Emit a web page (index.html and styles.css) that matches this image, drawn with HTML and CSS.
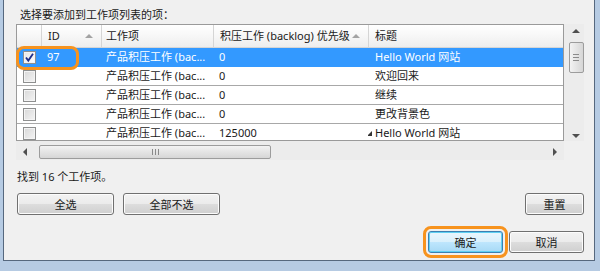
FILE: index.html
```html
<!DOCTYPE html>
<html lang="zh-CN">
<head>
   <meta charset="UTF-8">
   <meta name="viewport" content="width=device-width, initial-scale=1">
   <link rel="stylesheet" href="styles.css">
   <title>选择工作项</title>
</head>

<body>

   <div class="window">
      <div class="prompt">选择要添加到工作项列表的项：</div>

      <div class="list">
         <div class="grid">
            <div class="row head">
               <div class="cell check"></div>
               <div class="cell id">ID <span class="sort"></span></div>
               <div class="cell item">工作项</div>
               <div class="cell prio">积压工作 (backlog) 优先级 <span class="sort"></span></div>
               <div class="cell title">标题</div>
            </div>

            <div class="row selected">
               <div class="cell check"><span class="box on">
                  <svg width="11" height="11" viewBox="0 0 11 11"><path d="M2 5.5 L4.3 8.6 L9 1.8" fill="none" stroke="#1f2f8a" stroke-width="1.8"/></svg>
               </span></div>
               <div class="cell id">97</div>
               <div class="cell item">产品积压工作 (bac...</div>
               <div class="cell prio">0</div>
               <div class="cell title">Hello World 网站</div>
            </div>

            <div class="row">
               <div class="cell check"><span class="box"></span></div>
               <div class="cell id"></div>
               <div class="cell item">产品积压工作 (bac...</div>
               <div class="cell prio">0</div>
               <div class="cell title">欢迎回来</div>
            </div>

            <div class="row">
               <div class="cell check"><span class="box"></span></div>
               <div class="cell id"></div>
               <div class="cell item">产品积压工作 (bac...</div>
               <div class="cell prio">0</div>
               <div class="cell title">继续</div>
            </div>

            <div class="row">
               <div class="cell check"><span class="box"></span></div>
               <div class="cell id"></div>
               <div class="cell item">产品积压工作 (bac...</div>
               <div class="cell prio">0</div>
               <div class="cell title">更改背景色</div>
            </div>

            <div class="row">
               <div class="cell check"><span class="box"></span></div>
               <div class="cell id"></div>
               <div class="cell item">产品积压工作 (bac...</div>
               <div class="cell prio">125000</div>
               <div class="cell title"><span class="twist"></span>Hello World 网站</div>
            </div>
         </div>

         <div class="vscroll">
            <span class="arrow up"></span>
            <span class="thumb vthumb"><i></i><i></i><i></i></span>
            <span class="fill"></span>
            <span class="arrow down"></span>
         </div>

         <div class="hscroll">
            <span class="arrow left"></span>
            <span class="thumb hthumb"><i></i><i></i><i></i></span>
            <span class="fill"></span>
            <span class="arrow right"></span>
         </div>
      </div>

      <div class="found">找到 16 个工作项。</div>

      <div class="actions">
         <button class="btn first">全选</button>
         <button class="btn">全部不选</button>
         <span class="fill"></span>
         <button class="btn small">重置</button>
      </div>

      <div class="dialog">
         <button class="btn wide default">确定</button>
         <button class="btn wide">取消</button>
      </div>

      <!-- marcas laranja -->
      <div class="callout callout-id"></div>
      <div class="callout callout-ok"></div>
   </div>

</body>
</html>
```

FILE: styles.css
```css
* {
   margin:0;
   padding:0;
   box-sizing:border-box;
   font-family:"Noto Sans", "Noto Sans CJK SC", sans-serif;
}

body {
   background:#b6cbe3;
   width:600px;
   height:271px;
   overflow:hidden;
}

.window {
   position:relative;
   background:#f0f0f0;
   margin-left:3px;
   width:592px;
   height:261px;
   border-left:1px solid #56687e;
   border-right:1px solid #56687e;
   border-bottom:1px solid #56687e;
   padding:5px 10px 0 12px;
   display:flex;
   flex-direction:column;
   font-size:11px;
   color:#1a1a1a;
}

.prompt {
   height:19px;
   line-height:19px;
   padding-left:4px;
}

/* lista */

.list {
   display:grid;
   grid-template-columns:548px 20px;
   grid-template-rows:117px 19px;
}

.grid {
   border:1px solid #9a9a9a;
   background:#fff;
   overflow:hidden;
}

.row {
   display:grid;
   grid-template-columns:24px 60px 112px 155px 195px;
   height:19px;
   border-bottom:1px solid #a8a8a8;
   align-items:center;
   white-space:nowrap;
}

.row.head {
   height:23px;
   border-bottom:1px solid #d5d5d5;
   background:linear-gradient(#ffffff, #f7f7f7 50%, #ededed);
   align-items:stretch;
}

.row.head .cell {
   display:flex;
   align-items:center;
   justify-content:space-between;
   padding-right:8px;
}

.row.head .cell + .cell {
   border-left:1px solid #d5d5d5;
}

.row.head .item {
   padding-left:4px;
}

.cell {
   overflow:hidden;
   padding-left:6px;
   line-height:18px;
}

.row .cell.title {
   padding-left:7px;
}

.row.head .cell.title {
   padding-left:6px;
}

.row .check {
   padding-left:6px;
   display:flex;
   align-items:center;
}

.row .item {
   padding-left:5px;
}

.row.selected {
   background:#3399ff;
   color:#fff;
   border-bottom-color:#3399ff;
}

.sort {
   width:0;
   height:0;
   border-left:4px solid transparent;
   border-right:4px solid transparent;
   border-bottom:4px solid #a3a3a3;
}

.box {
   display:flex;
   align-items:center;
   justify-content:center;
   width:13px;
   height:13px;
   border:1px solid #8e8f8f;
   background:linear-gradient(135deg, #d8d8d8, #f4f4f4);
   box-shadow:inset 0 0 0 1px #f4f4f4;
}

.box.on {
   background:linear-gradient(135deg, #e6e6e6, #ffffff);
}

.twist {
   display:inline-block;
   width:0;
   height:0;
   margin-left:-8px;
   margin-right:3px;
   border-left:5px solid transparent;
   border-bottom:5px solid #333;
   vertical-align:1px;
}

/* barras de rolagem */

.vscroll {
   display:flex;
   flex-direction:column;
   align-items:center;
   padding-left:4px;
   background:#ececec;
}

.vscroll .arrow.up {
   margin-top:5px;
   border-left:4px solid transparent;
   border-right:4px solid transparent;
   border-bottom:4px solid #4f4f4f;
}

.vscroll .arrow.down {
   margin-bottom:3px;
   border-left:4px solid transparent;
   border-right:4px solid transparent;
   border-top:4px solid #4f4f4f;
}

.arrow {
   width:0;
   height:0;
}

.fill {
   flex:1;
}

.thumb {
   display:flex;
   align-items:center;
   justify-content:center;
   gap:2px;
   border:1px solid #9c9c9c;
   border-radius:2px;
}

.vthumb {
   margin-top:9px;
   width:15px;
   height:31px;
   flex-direction:column;
   background:linear-gradient(90deg, #f3f3f3, #e4e4e4 50%, #d6d6d6);
}

.vthumb i {
   display:block;
   width:6px;
   height:1px;
   background:#8a8a8a;
}

.hscroll {
   display:flex;
   align-items:center;
   padding-top:3px;
   background:#ececec;
}

.hscroll .arrow.left {
   margin-left:7px;
   border-top:4px solid transparent;
   border-bottom:4px solid transparent;
   border-right:4px solid #4f4f4f;
}

.hscroll .arrow.right {
   margin-right:7px;
   border-top:4px solid transparent;
   border-bottom:4px solid transparent;
   border-left:4px solid #4f4f4f;
}

.hthumb {
   margin-left:12px;
   width:232px;
   height:14px;
   background:linear-gradient(#f3f3f3, #e4e4e4 50%, #d6d6d6);
}

.hthumb i {
   display:block;
   width:1px;
   height:6px;
   background:#8a8a8a;
}

/* rodape */

.found {
   margin-top:8px;
   height:18px;
   line-height:18px;
   padding-left:1px;
}

.actions {
   margin-top:7px;
   display:flex;
   gap:9px;
}

.dialog {
   margin-top:16px;
   display:flex;
   justify-content:flex-end;
   gap:6px;
}

.btn {
   width:97px;
   height:22px;
   border:1px solid #707070;
   border-radius:3px;
   background:linear-gradient(#f2f2f2, #ebebeb 50%, #dddddd 51%, #cfcfcf);
   box-shadow:inset 0 0 0 1px #fcfcfc;
   font-size:11px;
   color:#1a1a1a;
   font-family:"Noto Sans CJK SC", sans-serif;
}

.btn.first {
   margin-left:1px;
}

.btn.small {
   width:59px;
}

.btn.wide {
   width:75px;
}

.btn.default {
   border-color:#3c7fb1;
   background:linear-gradient(#eaf6fd, #d9f0fc 50%, #bee6fd 51%, #a7d9f5);
   box-shadow:inset 0 0 0 1px #5fd0f2;
}

.callout {
   position:absolute;
   border:3px solid #f7931e;
   border-radius:8px;
}

.callout-id {
   left:12px;
   top:46px;
   width:63px;
   height:24px;
}

.callout-ok {
   left:419px;
   top:226px;
   width:85px;
   height:32px;
}
```
